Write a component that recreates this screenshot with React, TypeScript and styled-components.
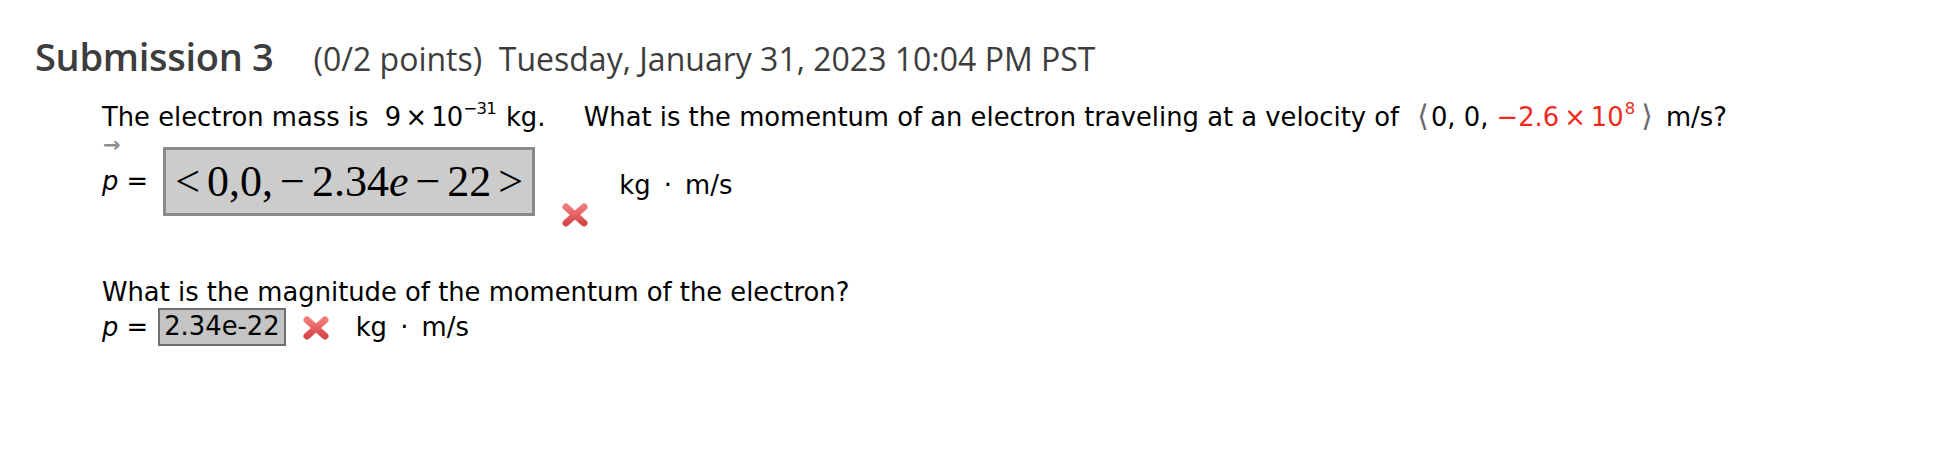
import styled, { createGlobalStyle } from "styled-components";

const GlobalStyle = createGlobalStyle`
  html, body {
    margin: 0;
    padding: 0;
    background: #ffffff;
  }
`;

const Page = styled.div`
  width: 1950px;
  height: 450px;
  padding: 30px 0 0 35px;
  box-sizing: border-box;
`;

const Header = styled.div`
  display: flex;
  align-items: baseline;
  color: #3d3d3d;
  font-family: "Open Sans", sans-serif;
  height: 50px;
  white-space: pre;
`;

const HeaderTitle = styled.span`
  font-size: 38px;
  font-weight: 600;
  letter-spacing: -0.3px;
`;

const HeaderMeta = styled.span`
  font-size: 32px;
  margin-left: 40px;
`;

const Body = styled.div`
  padding-left: 67px;
  font-family: "DejaVu Sans", Verdana, sans-serif;
  font-size: 25.8px;
  color: #000;
`;

const Line = styled.div<{ $top?: number }>`
  white-space: pre;
  margin-top: ${(p) => p.$top ?? 0}px;
  line-height: 32px;
`;

const MathNum = styled.span`
  letter-spacing: -0.8px;
`;

const Sup = styled.span`
  font-size: 0.64em;
  position: relative;
  top: -0.75em;
  margin-left: 1px;
`;

const Times = styled.span`
  margin: 0 5px;
`;

const Gap = styled.span<{ $w: number }>`
  display: inline-block;
  width: ${(p) => p.$w}px;
`;

const Red = styled.span`
  color: #ee2a20;
`;

const Angle = styled.span<{ $l?: number; $r?: number }>`
  color: #6a6a6a;
  font-size: 1.15em;
  margin-left: ${(p) => p.$l ?? 0}px;
  margin-right: ${(p) => p.$r ?? 0}px;
`;

const AnswerRow = styled.div<{ $top?: number }>`
  display: flex;
  align-items: flex-start;
  margin-top: ${(p) => p.$top ?? 0}px;
`;

const Symbol = styled.span`
  position: relative;
  font-style: italic;
  display: inline-block;
`;

const VecArrow = styled.span`
  position: absolute;
  left: 1px;
  top: -36px;
  font-size: 21px;
  color: #8e8e8e;
  font-style: normal;
  font-weight: bold;
`;

const Label = styled.div<{ $top: number }>`
  white-space: pre;
  margin-top: ${(p) => p.$top}px;
  line-height: 32px;
`;

const MathBox = styled.div`
  margin-left: 15px;
  width: 372px;
  height: 69px;
  box-sizing: border-box;
  background: #cccccc;
  border: 3px solid #8a8a8a;
  display: flex;
  align-items: center;
  justify-content: center;
  font-family: "Liberation Serif", "Times New Roman", serif;
  font-size: 44px;
  color: #000;
  white-space: pre;
`;

const Op = styled.span<{ $l?: number; $r?: number }>`
  margin-left: ${(p) => p.$l ?? 0}px;
  margin-right: ${(p) => p.$r ?? 0}px;
`;

const Ital = styled.span`
  font-style: italic;
`;

const TextBox = styled.div`
  margin-left: 10px;
  height: 38px;
  padding: 0 4px;
  box-sizing: border-box;
  background: #c4c4c4;
  border: 2px solid #6f6f6f;
  display: flex;
  align-items: center;
  line-height: 1;
`;

const Cross = styled.svg<{ $left: number; $top: number }>`
  margin-left: ${(p) => p.$left}px;
  margin-top: ${(p) => p.$top}px;
  flex: none;
`;

const Unit = styled.div<{ $left: number; $top: number }>`
  margin-left: ${(p) => p.$left}px;
  margin-top: ${(p) => p.$top}px;
  white-space: pre;
  word-spacing: 5px;
  line-height: 32px;
`;

function WrongMark({ left, top }: { left: number; top: number }) {
  return (
    <Cross $left={left} $top={top} width="28" height="26" viewBox="0 0 28 26">
      <defs>
        <linearGradient id="xg" x1="0" y1="0" x2="0" y2="1">
          <stop offset="0" stopColor="#f07a7a" />
          <stop offset="1" stopColor="#d94848" />
        </linearGradient>
      </defs>
      <g stroke="url(#xg)" strokeWidth="7" strokeLinecap="round">
        <line x1="5" y1="5" x2="23" y2="21" />
        <line x1="23" y1="5" x2="5" y2="21" />
      </g>
    </Cross>
  );
}

export default function App() {
  return (
    <>
      <GlobalStyle />
      <Page>
        <Header>
          <HeaderTitle>Submission 3</HeaderTitle>
          <HeaderMeta>(0/2 points)  Tuesday, January 31, 2023 10:04 PM PST</HeaderMeta>
        </Header>
        <Body>
          <Line $top={20}>
            {"The electron mass is  "}
            <MathNum>
              9<Times>×</Times>10<Sup>−31</Sup>
            </MathNum>
            <Gap $w={10} />
            {"kg."}
            <Gap $w={22} />
            {"  What is the momentum of an electron traveling at a velocity of "}
            <Angle $l={10} $r={2}>
              ⟨
            </Angle>
            {"0, 0, "}
            <Red>
              −2.6<Times>×</Times>10<Sup>8</Sup>
            </Red>
            <Angle $l={6} $r={5}>
              ⟩
            </Angle>
            {" m/s?"}
          </Line>
          <AnswerRow $top={10}>
            <Label $top={18}>
              <Symbol>
                <VecArrow>→</VecArrow>p
              </Symbol>
              {" ="}
            </Label>
            <MathBox>
              <Op $r={7}>&lt;</Op>
              0,0,
              <Op $l={7} $r={7}>
                −
              </Op>
              2.34<Ital>e</Ital>
              <Op $l={7} $r={7}>
                −
              </Op>
              22
              <Op $l={7}>&gt;</Op>
            </MathBox>
            <WrongMark left={26} top={55} />
            <Unit $left={30} $top={22}>
              kg · m/s
            </Unit>
          </AnswerRow>
          <Line $top={48}>What is the magnitude of the momentum of the electron?</Line>
          <AnswerRow $top={0}>
            <Label $top={3}>
              <Symbol>p</Symbol>
              {" ="}
            </Label>
            <TextBox>2.34e-22</TextBox>
            <WrongMark left={16} top={7} />
            <Unit $left={26} $top={3}>
              kg · m/s
            </Unit>
          </AnswerRow>
        </Body>
      </Page>
    </>
  );
}
